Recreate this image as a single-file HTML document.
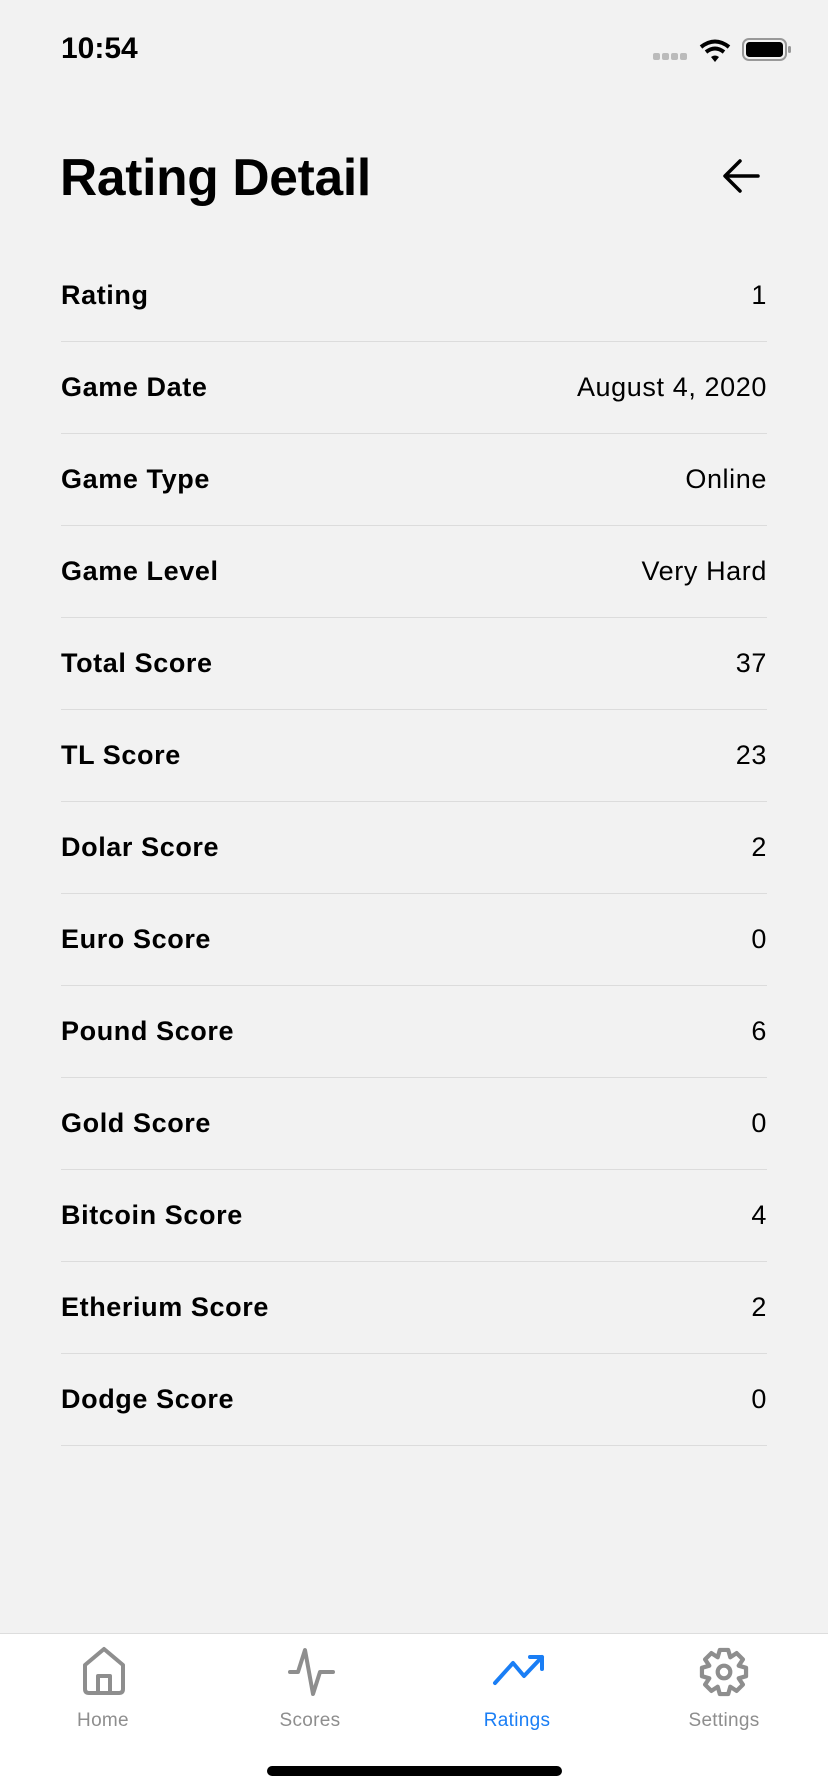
<!DOCTYPE html>
<html><head><meta charset="utf-8"><style>
*{margin:0;padding:0;box-sizing:border-box}
body{width:828px;height:1792px;background:#f2f2f2;font-family:"Liberation Sans",sans-serif;position:relative;overflow:hidden;color:#000}
.time{position:absolute;left:61px;top:32px;font-size:30px;font-weight:bold}
.title{position:absolute;left:60px;top:147px;font-size:51.5px;font-weight:bold;letter-spacing:-0.3px}
.list{position:absolute;left:61px;top:250px;width:706px}
.row{height:92px;border-bottom:1.5px solid #dcdcdc;display:flex;justify-content:space-between;align-items:center;font-size:27px;letter-spacing:0.6px}
.row b{font-weight:bold}
.tab{position:absolute;left:0;top:1633px;width:828px;height:159px;background:#fff;border-top:1.5px solid #ddd}
.t{position:absolute;top:1710px;font-size:19px;color:#8e8e8e;width:160px;text-align:center;letter-spacing:0.3px}
.hi{position:absolute;left:267px;top:1766px;width:295px;height:10px;border-radius:5px;background:#000}
</style></head><body>
<div class="time">10:54</div>
<svg style="position:absolute;left:650px;top:36px" width="146" height="28" viewBox="0 0 146 28">
<g fill="#bbb"><rect x="3" y="17" width="7" height="7" rx="2"/><rect x="12" y="17" width="7" height="7" rx="2"/><rect x="21" y="17" width="7" height="7" rx="2"/><rect x="30" y="17" width="7" height="7" rx="2"/></g>
<path d="M51 11 Q65 0 79 11" stroke="#000" stroke-width="4" fill="none"/><path d="M56 16 Q65 9 74 16" stroke="#000" stroke-width="4" fill="none"/><path d="M61 21 L65 26 L69 21 Q65 18 61 21Z" fill="#000"/>
<rect x="93" y="3" width="43" height="21" rx="6" fill="none" stroke="#999" stroke-width="2"/><rect x="96" y="6" width="37" height="15" rx="3.5" fill="#000"/><rect x="138" y="10" width="3" height="7" rx="1.5" fill="#999"/>
</svg>
<div class="title">Rating Detail</div>
<svg style="position:absolute;left:720px;top:156px" width="42" height="42" viewBox="0 0 42 42"><path d="M38 20 H6 M20 5 L5 20 L20 35" stroke="#000" stroke-width="3.5" fill="none" stroke-linecap="round" stroke-linejoin="round"/></svg>
<div class="list">
<div class="row"><b>Rating</b><span>1</span></div>
<div class="row"><b>Game Date</b><span>August 4, 2020</span></div>
<div class="row"><b>Game Type</b><span>Online</span></div>
<div class="row"><b>Game Level</b><span>Very Hard</span></div>
<div class="row"><b>Total Score</b><span>37</span></div>
<div class="row"><b>TL Score</b><span>23</span></div>
<div class="row"><b>Dolar Score</b><span>2</span></div>
<div class="row"><b>Euro Score</b><span>0</span></div>
<div class="row"><b>Pound Score</b><span>6</span></div>
<div class="row"><b>Gold Score</b><span>0</span></div>
<div class="row"><b>Bitcoin Score</b><span>4</span></div>
<div class="row"><b>Etherium Score</b><span>2</span></div>
<div class="row"><b>Dodge Score</b><span>0</span></div>
</div>
<div class="tab"></div>
<svg style="position:absolute;left:0;top:1640px" width="828" height="80" viewBox="0 0 828 80">
<g fill="none" stroke="#8e8e8e" stroke-width="4" stroke-linejoin="round" stroke-linecap="round">
<path d="M85 25 L104 9 L123 25 V49 Q123 53 119 53 H89 Q85 53 85 49 Z"/>
<path d="M98 53 V36 H110 V53"/>
<path d="M290 32 H298 L305 10 L313 54 L320 32 H333"/>
<g transform="translate(724,32) scale(1.05)"><path d="M-4 -24 H4 L6 -17 L12 -21 L18 -15 L14 -9 L21 -7 V1 L14 3 L18 9 L12 15 L6 11 L4 18 H-4 L-6 11 L-12 15 L-18 9 L-14 3 L-21 1 V-7 L-14 -9 L-18 -15 L-12 -21 L-6 -17 Z" transform="translate(0,3)"/><circle cx="0" cy="0" r="6"/></g>
</g>
<path d="M495 43 L513 23 L524 36 L542 17 M530 17 H542 V29" fill="none" stroke="#1a7ef5" stroke-width="4" stroke-linecap="round" stroke-linejoin="round"/>
</svg>
<div class="t" style="left:23px">Home</div>
<div class="t" style="left:230px">Scores</div>
<div class="t" style="left:437px;color:#1a7ef5">Ratings</div>
<div class="t" style="left:644px">Settings</div>
<div class="hi"></div>
</body></html>
